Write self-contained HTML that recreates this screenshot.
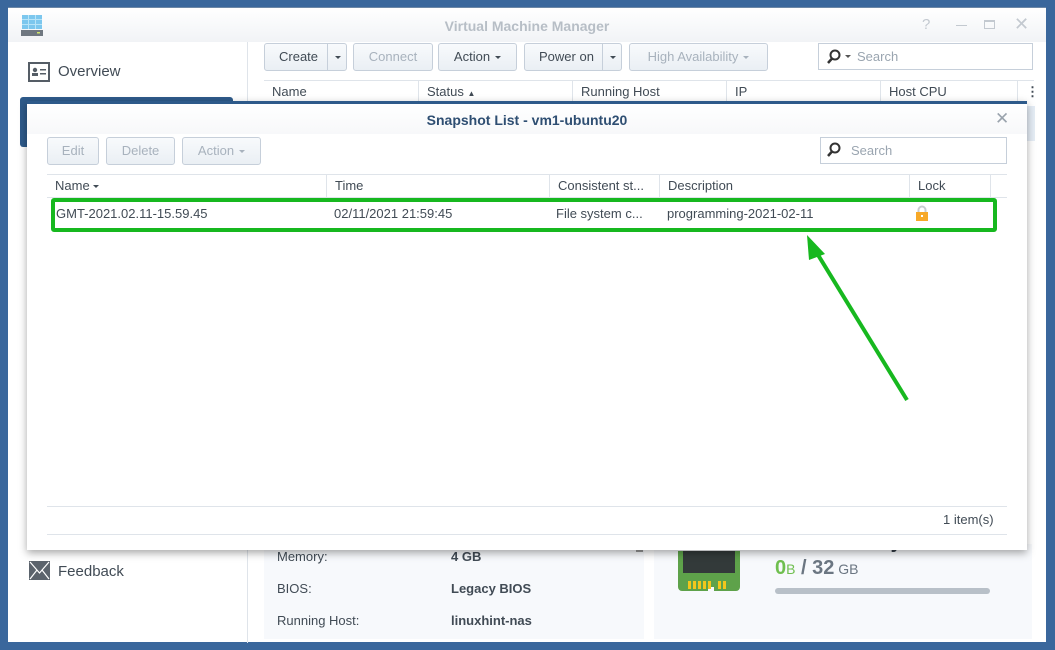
<!DOCTYPE html>
<html><head><meta charset="utf-8"><style>
*{box-sizing:border-box;margin:0;padding:0}
body{width:1055px;height:650px;background:#3a679c;font-family:"Liberation Sans",sans-serif;font-size:13px;color:#414b55;position:relative;overflow:hidden}
.abs{position:absolute}
.win{left:8px;top:7px;width:1038px;height:635px;background:#fff;border-top:1px solid #6c87a6}
.title{left:0;top:0;width:1038px;height:34px;background:linear-gradient(#fff,#f1f3f6)}
.btn{position:absolute;height:28px;border:1px solid #c6cfda;border-radius:3px;background:linear-gradient(#f8fafc,#eaeff4);text-align:center;line-height:26px;color:#414b55;font-size:13px}
.dis{color:#a8b2bd}
.caret{display:inline-block;border-left:3px solid transparent;border-right:3px solid transparent;border-top:3px solid currentColor;vertical-align:middle;margin-left:5px}
.search{position:absolute;height:27px;border:1px solid #c6cfda;background:#fff;color:#9aa5b0;line-height:25px;padding-left:30px}
.th{position:absolute;top:0;height:100%;border-left:1px solid #dfe4ea;padding-left:8px;line-height:22px}
</style></head><body>
<div class="abs win">
 <div class="abs title">
  <svg class="abs" style="left:13px;top:6px" width="22" height="24"><rect x="1" y="1" width="20" height="14" fill="#7cc7ee"/><g stroke="#b7e4f8" stroke-width="1"><line x1="1" y1="5.5" x2="21" y2="5.5"/><line x1="1" y1="10.5" x2="21" y2="10.5"/><line x1="7.5" y1="1" x2="7.5" y2="15"/><line x1="14.5" y1="1" x2="14.5" y2="15"/></g><rect x="0" y="16" width="22" height="6" fill="#6f7780"/><rect x="16" y="18" width="3" height="1.5" fill="#cfe56a"/></svg>
  <div class="abs" style="left:0;width:1038px;top:10px;text-align:center;font-weight:bold;color:#b7bec6;font-size:14px">Virtual Machine Manager</div>
  <div class="abs" style="left:914px;top:8px;color:#c3c9d0;font-size:15px">?</div>
  <div class="abs" style="left:948px;top:17px;width:11px;height:1px;background:#c3c9d0"></div>
  <div class="abs" style="left:976px;top:12px;width:11px;height:9px;border:1px solid #c3c9d0;border-top-width:2px"></div>
  <div class="abs" style="left:1006px;top:6px;color:#c3c9d0;font-size:18px">✕</div>
 </div>
 <div class="abs" style="left:239px;top:34px;width:1px;height:601px;background:#dfe4ea"></div>
 <svg class="abs" style="left:20px;top:54px" width="22" height="20"><rect x="1" y="1" width="20" height="18" fill="none" stroke="#555d66" stroke-width="2"/><circle cx="7" cy="8" r="2.2" fill="#555d66"/><rect x="4" y="11" width="6" height="3" fill="#555d66"/><rect x="12" y="7" width="6" height="1.5" fill="#555d66"/><rect x="12" y="11" width="6" height="1.5" fill="#555d66"/></svg>
 <div class="abs" style="left:50px;top:55px;font-size:15px;color:#414b55">Overview</div>
 <div class="abs" style="left:12px;top:89px;width:213px;height:50px;background:#2e5a8a;border-radius:3px"></div>
 <svg class="abs" style="left:21px;top:553px" width="21" height="19"><rect width="21" height="19" fill="#5b636c"/><path d="M1 1 L10.5 12 L20 1 M1 18 L8 9 M20 18 L13 9" stroke="#fff" stroke-width="1.2" fill="none"/></svg>
 <div class="abs" style="left:50px;top:555px;font-size:15px">Feedback</div>
 <div class="btn" style="left:256px;top:35px;width:83px;text-align:left;padding-left:14px">Create<span style="position:absolute;left:62px;top:0;height:26px;border-left:1px solid #c6cfda;width:20px;text-align:center"><span class="caret" style="margin:0"></span></span></div>
 <div class="btn dis" style="left:345px;top:35px;width:80px">Connect</div>
 <div class="btn" style="left:430px;top:35px;width:79px">Action<span class="caret"></span></div>
 <div class="btn" style="left:516px;top:35px;width:98px;text-align:left;padding-left:14px">Power on<span style="position:absolute;left:77px;top:0;height:26px;border-left:1px solid #c6cfda;width:20px;text-align:center"><span class="caret" style="margin:0"></span></span></div>
 <div class="btn dis" style="left:621px;top:35px;width:139px">High Availability<span class="caret"></span></div>
 <div class="search" style="left:810px;top:35px;width:215px;padding-left:38px">Search</div>
 <svg class="abs" style="left:818px;top:41px" width="26" height="16"><circle cx="9" cy="6" r="4.5" fill="none" stroke="#333" stroke-width="2"/><line x1="6" y1="9.5" x2="2" y2="14" stroke="#333" stroke-width="2.5"/><path d="M19 6h6l-3 3z" fill="#555"/></svg>
 <div class="abs" style="left:256px;top:72px;width:770px;height:22px;border-top:1px solid #dfe4ea">
  <div class="th" style="left:0;border:0">Name</div><div class="th" style="left:154px">Status <span style="font-size:8px">▲</span></div><div class="th" style="left:308px">Running Host</div><div class="th" style="left:462px">IP</div><div class="th" style="left:616px">Host CPU</div><div class="th" style="left:753px;font-weight:bold">⋮</div>
 </div>
 <div class="abs" style="left:1017px;top:98px;width:10px;height:35px;background:#e4ecf5"></div>
 <div class="abs" style="left:256px;top:536px;width:380px;height:95px;background:#f7f9fc"></div>
 <div class="abs" style="left:646px;top:536px;width:378px;height:95px;background:#f7f9fc"></div>
 <div class="abs" style="left:628px;top:540px;width:7px;height:4px;background:#999"></div>
 <div class="abs" style="left:269px;top:541px">Memory:</div><div class="abs" style="left:443px;top:541px;font-weight:bold">4 GB</div>
 <div class="abs" style="left:269px;top:573px">BIOS:</div><div class="abs" style="left:443px;top:573px;font-weight:bold">Legacy BIOS</div>
 <div class="abs" style="left:269px;top:605px">Running Host:</div><div class="abs" style="left:443px;top:605px;font-weight:bold">linuxhint-nas</div>
 <div class="abs" style="left:767px;top:523px;font-size:20px;font-weight:bold;color:#333c46">Host Memory</div>
 <svg class="abs" style="left:670px;top:543px" width="62" height="44"><path d="M0 0h62v36a4 4 0 0 1-4 4h-22v-4h-6v4h-26a4 4 0 0 1-4-4z" fill="#5ea24a"/><rect x="5" y="0" width="52" height="22" fill="#333a3a"/><g fill="#f2c61c"><rect x="10" y="30" width="3" height="8"/><rect x="15" y="30" width="3" height="8"/><rect x="20" y="30" width="3" height="8"/><rect x="25" y="30" width="3" height="8"/><rect x="30" y="30" width="3" height="8"/><rect x="40" y="30" width="3" height="8"/><rect x="45" y="30" width="3" height="8"/></g></svg>
 <div class="abs" style="left:767px;top:549px;font-size:20px;font-weight:bold;color:#6b7682"><span style="color:#6fbf4f">0</span><span style="font-size:14px;font-weight:normal;color:#6fbf4f">B</span> / 32<span style="font-size:14px;font-weight:normal"> GB</span></div>
 <div class="abs" style="left:767px;top:580px;width:215px;height:6px;border-radius:3px;background:#b8c0c8"></div>
</div>
<!-- dialog -->
<div class="abs" style="left:27px;top:101px;width:1000px;height:449px;background:#fff;border-top:3px solid #2e5a8a;box-shadow:0 3px 8px rgba(0,0,0,.35)">
 <div class="abs" style="left:0;top:0;width:1000px;height:30px;background:linear-gradient(#fff,#f7f8fa)"></div>
 <div class="abs" style="left:0;width:1000px;top:8px;text-align:center;font-weight:bold;color:#2e4e72;font-size:14px">Snapshot List - vm1-ubuntu20</div>
 <div class="abs" style="left:968px;top:5px;color:#9aa3ad;font-size:17px">✕</div>
 <div class="btn dis" style="left:20px;top:33px;width:52px">Edit</div>
 <div class="btn dis" style="left:79px;top:33px;width:69px">Delete</div>
 <div class="btn dis" style="left:155px;top:33px;width:79px">Action<span class="caret"></span></div>
 <div class="search" style="left:793px;top:33px;width:187px;padding-left:30px;color:#9aa5b0">Search</div>
 <svg class="abs" style="left:799px;top:38px" width="16" height="16"><circle cx="9" cy="6" r="4.5" fill="none" stroke="#333" stroke-width="2"/><line x1="6" y1="9.5" x2="2" y2="14" stroke="#333" stroke-width="2.5"/></svg>
 <div class="abs" style="left:20px;top:70px;width:960px;height:24px;border-top:1px solid #dfe4ea;border-bottom:1px solid #dfe4ea">
  <div class="th" style="left:0;border:0">Name <span class="caret" style="margin-left:0"></span></div><div class="th" style="left:279px">Time</div><div class="th" style="left:502px">Consistent st...</div><div class="th" style="left:612px">Description</div><div class="th" style="left:862px">Lock</div><div class="th" style="left:943px"></div>
 </div>
 <div class="abs" style="left:29px;top:102px">GMT-2021.02.11-15.59.45</div>
 <div class="abs" style="left:307px;top:102px">02/11/2021 21:59:45</div>
 <div class="abs" style="left:529px;top:102px">File system c...</div>
 <div class="abs" style="left:640px;top:102px">programming-2021-02-11</div>
 <svg class="abs" style="left:888px;top:101px" width="14" height="16"><path d="M3.5 7V5a3.5 3.5 0 0 1 7 0v2" fill="none" stroke="#c8ccd0" stroke-width="2"/><rect x="1" y="7" width="12" height="9" fill="#f7a928"/><rect x="6" y="10" width="2" height="2" fill="#fff"/></svg>
 <div class="abs" style="left:24px;top:94px;width:946px;height:34px;border:4px solid #17b81f;border-radius:3px"></div>
 <div class="abs" style="left:20px;top:402px;width:960px;height:1px;background:#dfe4ea"></div>
 <div class="abs" style="left:916px;top:408px;color:#414b55">1 item(s)</div>
 <div class="abs" style="left:20px;top:430px;width:960px;height:1px;background:#dfe4ea"></div>
</div>
<svg class="abs" style="left:795px;top:230px" width="120" height="180"><line x1="112" y1="170" x2="20" y2="20" stroke="#17b81f" stroke-width="4"/><path d="M12 5 L30 24 L14 30 Z" fill="#17b81f"/></svg>
</body></html>
